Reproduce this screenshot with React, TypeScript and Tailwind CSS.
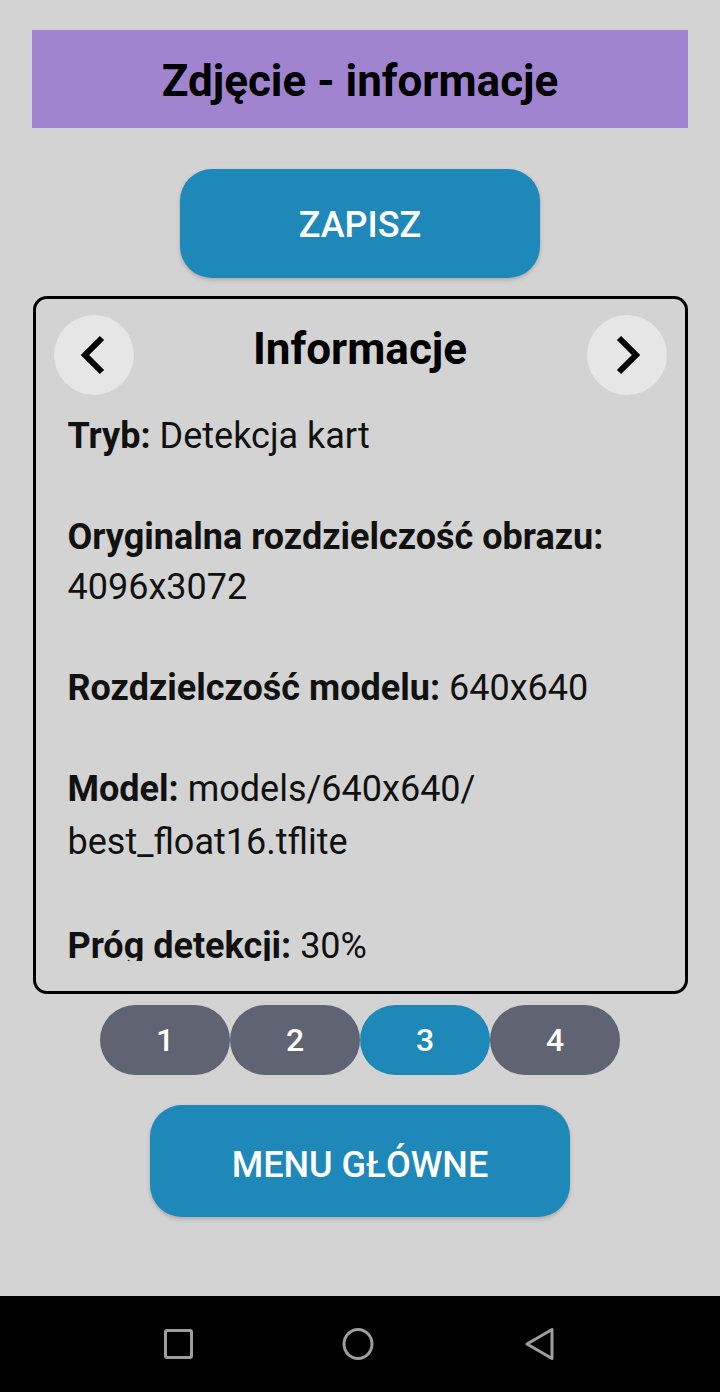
import { useState } from 'react';

const items = [
  { label: 'Tryb:', value: 'Detekcja kart' },
  { label: 'Oryginalna rozdzielczość obrazu:', value: '4096x3072' },
  { label: 'Rozdzielczość modelu:', value: '640x640' },
  { label: 'Model:', value: 'models/640x640/', tail: 'best_float16.tflite' },
  { label: 'Próg detekcji:', value: '30%' },
];

function Chevron({ dir }: { dir: 'left' | 'right' }) {
  return (
    <svg width="40" height="40" viewBox="0 0 40 40">
      <path
        d={dir === 'left' ? 'M28 3 L11 20 L28 37' : 'M12 3 L29 20 L12 37'}
        fill="none"
        stroke="#000"
        strokeWidth="6"
      />
    </svg>
  );
}

export default function App() {
  const [page, setPage] = useState(3);

  return (
    <div
      className="flex h-[1392px] w-[720px] flex-col bg-[#d3d3d3]"
      style={{ fontFamily: 'Roboto, "Noto Sans", sans-serif' }}
    >
      <main className="flex flex-1 flex-col items-center px-[32px] pt-[30px]">
        {/* header */}
        <div className="flex h-[98px] w-full items-center justify-center bg-[#a084d0]">
          <h1 className="mt-[3px] text-[44px] font-bold text-black">Zdjęcie - informacje</h1>
        </div>

        <button className="mt-[41px] flex h-[109px] w-[360px] items-center justify-center rounded-[32px] bg-[#1e88b8] pt-[3px] text-[36px] font-medium text-white shadow-[0_2px_4px_rgba(0,0,0,0.2)]">
          ZAPISZ
        </button>

        {/* card */}
        <div className="mt-[18px] w-[655px] rounded-[14px] border-[3px] border-black px-[18px] pt-[16px] pb-[30px]">
          <div className="flex items-center justify-between">
            <button className="flex h-[80px] w-[80px] items-center justify-center rounded-full bg-[#e6e6e6]">
              <Chevron dir="left" />
            </button>
            <h2 className="-mt-[12px] text-[44px] font-bold text-black">Informacje</h2>
            <button className="flex h-[80px] w-[80px] items-center justify-center rounded-full bg-[#e6e6e6]">
              <Chevron dir="right" />
            </button>
          </div>
          <div className="mt-[14px] h-[552px] overflow-hidden px-[14px] pt-[2px] text-[36px] leading-[50px] text-[#111]">
            {items.map((it) => (
              <p key={it.label} className="mb-[51px]">
                <span className="font-bold">{it.label}</span> {it.value}
                {it.tail && <span className="block leading-[56px]">{it.tail}</span>}
              </p>
            ))}
          </div>
        </div>

        {/* pagination */}
        <div className="mt-[11px] flex">
          {[1, 2, 3, 4].map((n) => (
            <button
              key={n}
              onClick={() => setPage(n)}
              className={`flex h-[70px] w-[130px] items-center justify-center rounded-[35px] text-[32px] font-medium text-white ${
                page === n ? 'bg-[#1e88b8]' : 'bg-[#5f6372]'
              }`}
            >
              {n}
            </button>
          ))}
        </div>

        <button className="mt-[30px] flex h-[112px] w-[420px] items-center justify-center rounded-[32px] bg-[#1e88b8] pt-[8px] text-[36px] font-medium text-white shadow-[0_2px_4px_rgba(0,0,0,0.2)]">
          MENU GŁÓWNE
        </button>
      </main>

      {/* android nav bar */}
      <nav className="flex h-[96px] items-center justify-center gap-[148px] bg-black">
        <svg width="30" height="30" viewBox="0 0 30 30">
          <rect x="1.5" y="1.5" width="26" height="27" rx="1.5" fill="none" stroke="#9e9e9e" strokeWidth="3" />
        </svg>
        <svg width="32" height="32" viewBox="0 0 32 32">
          <ellipse cx="16" cy="16" rx="14" ry="14.5" fill="none" stroke="#9e9e9e" strokeWidth="3" />
        </svg>
        <svg width="34" height="34" viewBox="0 0 34 34">
          <path d="M5 17 L30 2.5 L30 31.5 Z" fill="none" stroke="#9e9e9e" strokeWidth="3" strokeLinejoin="round" />
        </svg>
      </nav>
    </div>
  );
}
